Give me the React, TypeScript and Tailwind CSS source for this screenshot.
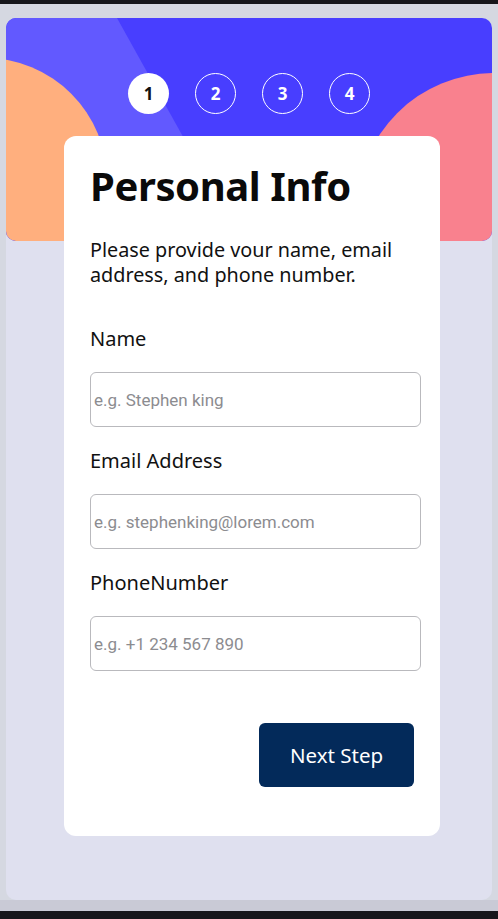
import React from "react";

const ubuntu = { fontFamily: '"Noto Sans", "Open Sans", sans-serif' };

function Field({ label, placeholder, first }: { label: string; placeholder: string; first?: boolean }) {
  return (
    <div className={first ? "mt-[40px]" : "mt-[22px]"}>
      <label className="block text-[20px] leading-[24px] text-[#111]" style={ubuntu}>
        {label}
      </label>
      <input
        placeholder={placeholder}
        className="mt-[21px] block w-[331px] h-[55px] rounded-[6px] border border-[#b9b9bd] bg-white pl-[3px] text-[17px] text-[#222] placeholder:text-[#8c8c90] outline-none"
        style={{ fontFamily: 'Roboto, "Liberation Sans", sans-serif' }}
      />
    </div>
  );
}

export default function App() {
  const steps = [1, 2, 3, 4];
  return (
    <div className="w-[498px] h-[919px] bg-[#d5d8e1] flex flex-col overflow-hidden">
      <div className="h-[4px] bg-[#16161b]" />
      <div className="flex-1 pl-[6px] pr-[6px] pt-[14px]">
        <div className="h-full rounded-[10px] bg-[#dfe0ef] flex flex-col">
          <header className="relative h-[223px] rounded-[10px] overflow-hidden bg-[#483eff] shrink-0">
            <svg className="absolute inset-0" width="486" height="223" viewBox="0 0 486 223">
              <polygon points="0,0 111,0 235,223 0,223" fill="#6259ff" />
              <circle cx="-21" cy="162" r="122" fill="#ffaf7e" />
              <circle cx="488" cy="192" r="137" fill="#f9818e" />
            </svg>
            <div className="relative flex justify-center gap-[26px] pt-[55px]">
              {steps.map((s) =>
                s === 1 ? (
                  <div
                    key={s}
                    className="w-[41px] h-[41px] rounded-full bg-white flex items-center justify-center text-[17px] font-bold text-[#111]"
                    style={ubuntu}
                  >
                    {s}
                  </div>
                ) : (
                  <div
                    key={s}
                    className="w-[41px] h-[41px] rounded-full border border-white flex items-center justify-center text-[17px] font-bold text-white"
                    style={ubuntu}
                  >
                    {s}
                  </div>
                )
              )}
            </div>
          </header>
          <main className="relative -mt-[105px] ml-[58px] w-[376px] h-[700px] bg-white rounded-[12px] pl-[26px] pt-[26px]">
            <h1 className="text-[40px] leading-[48px] font-bold text-[#0a0a0a] tracking-[-0.4px]" style={ubuntu}>
              Personal Info
            </h1>
            <p className="mt-[27px] w-[325px] text-[19.8px] leading-[25px] text-[#111]" style={ubuntu}>
              Please provide vour name, email address, and phone number.
            </p>
            <Field first label="Name" placeholder="e.g. Stephen king" />
            <Field label="Email Address" placeholder="e.g. stephenking@lorem.com" />
            <Field label="PhoneNumber" placeholder="e.g. +1 234 567 890" />
            <div className="mt-[52px] w-[331px] flex justify-end pr-[7px]">
              <button
                className="w-[155px] h-[64px] rounded-[6px] bg-[#032a5a] text-white text-[20.5px]"
                style={ubuntu}
              >
                Next Step
              </button>
            </div>
          </main>
        </div>
      </div>
      <div className="h-[11px] bg-[#c9cad6]" />
      <div className="h-[8px] bg-[#16161b]" />
    </div>
  );
}
